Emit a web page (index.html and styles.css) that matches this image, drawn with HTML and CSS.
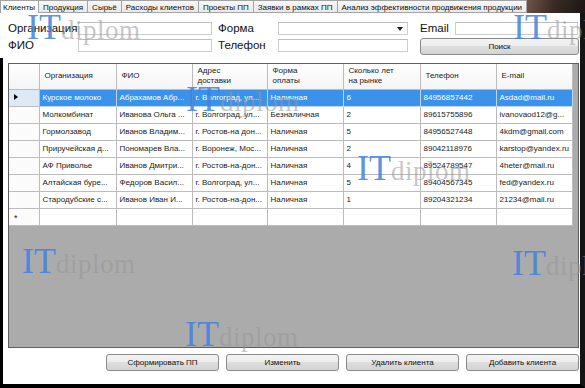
FILE: index.html
```html
<!DOCTYPE html>
<html lang="ru">
<head>
<meta charset="utf-8">
<title>Клиенты</title>
<link rel="stylesheet" href="styles.css">
</head>
<body>
<div class="tabs">
  <div class="tab active">Клиенты</div>
  <div class="tab">Продукция</div>
  <div class="tab">Сырьё</div>
  <div class="tab">Расходы клиентов</div>
  <div class="tab">Проекты ПП</div>
  <div class="tab">Заявки в рамках ПП</div>
  <div class="tab">Анализ эффективности продвижения продукции</div>
  <div class="tab-fill"></div>
</div>
<div class="main">
  <div class="form">
    <label class="lbl">Организация</label>
    <div class="field"></div>
    <label class="lbl lbl2">Форма</label>
    <div class="field select"><svg class="arrow" width="6" height="4" viewBox="0 0 6 4"><path d="M0 0H6L3 4Z" fill="#222"/></svg></div>
    <span></span>
    <label class="lbl">Email</label>
    <div class="field"></div>

    <label class="lbl">ФИО</label>
    <div class="field"></div>
    <label class="lbl lbl2">Телефон</label>
    <div class="field"></div>
    <span></span>
    <button class="btn search">Поиск</button>
  </div>
  <div class="lower">
    <div class="grid">
      <table>
        <colgroup>
          <col class="c-rh"><col class="c1"><col class="c2"><col class="c3"><col class="c4"><col class="c5"><col class="c6"><col class="c7">
        </colgroup>
        <thead>
          <tr>
            <th class="rh"></th>
            <th>Организация</th>
            <th>ФИО</th>
            <th>Адрес<br>доставки</th>
            <th>Форма<br>оплаты</th>
            <th>Сколько лет<br>на рынке</th>
            <th>Телефон</th>
            <th>E-mail</th>
          </tr>
        </thead>
        <tbody>
          <tr class="sel">
            <td class="rh"><svg width="4" height="6" viewBox="0 0 4 6"><path d="M0 0L4 3L0 6Z" fill="#000"/></svg></td>
            <td>Курское молоко</td><td>Абрахамов Абр...</td><td>г. Волгоград, ул...</td><td>Наличная</td><td>6</td><td>84956857442</td><td>Asdad@mail.ru</td>
          </tr>
          <tr>
            <td class="rh"></td>
            <td>Молкомбинат</td><td>Иванова Ольга ...</td><td>г. Волгоград, ул...</td><td>Безналичная</td><td>2</td><td>89615755896</td><td>ivanovaod12@g...</td>
          </tr>
          <tr>
            <td class="rh"></td>
            <td>Гормолзавод</td><td>Иванов Владим...</td><td>г. Ростов-на дон...</td><td>Наличная</td><td>5</td><td>84956527448</td><td>4kdm@gmail.com</td>
          </tr>
          <tr>
            <td class="rh"></td>
            <td>Приручейская д...</td><td>Пономарев Вла...</td><td>г. Воронеж, Мос...</td><td>Наличная</td><td>2</td><td>89042118976</td><td>karstop@yandex.ru</td>
          </tr>
          <tr>
            <td class="rh"></td>
            <td>АФ Приволье</td><td>Иванов Дмитри...</td><td>г. Ростов-на-дон...</td><td>Наличная</td><td>4</td><td>89524789547</td><td>4heter@mail.ru</td>
          </tr>
          <tr>
            <td class="rh"></td>
            <td>Алтайская буре...</td><td>Федоров Васил...</td><td>г. Волгоград, ул...</td><td>Наличная</td><td>5</td><td>89404567345</td><td>fed@yandex.ru</td>
          </tr>
          <tr>
            <td class="rh"></td>
            <td>Стародубские с...</td><td>Иванов Иван И...</td><td>г. Ростов-на-дон...</td><td>Наличная</td><td>1</td><td>89204321234</td><td>21234@mail.ru</td>
          </tr>
          <tr class="new">
            <td class="rh"><span class="star">*</span></td>
            <td></td><td></td><td></td><td></td><td></td><td></td><td></td>
          </tr>
        </tbody>
      </table>
    </div>
    <div class="btns">
      <button class="btn">Сформировать ПП</button>
      <button class="btn">Изменить</button>
      <button class="btn">Удалить клиента</button>
      <button class="btn">Добавить клиента</button>
    </div>
  </div>
</div>

<div class="wm wm1"><span class="it">IT</span><span class="dp">diplom</span></div>
<div class="wm wm2"><span class="it">IT</span><span class="dp">diplom</span></div>
<div class="wm wm3"><span class="it">IT</span><span class="dp">diplom</span></div>
<div class="wm wm4"><span class="it">IT</span><span class="dp">diplom</span></div>
<div class="wm wm5"><span class="it">IT</span><span class="dp">diplom</span></div>
<div class="wm wm6"><span class="it">IT</span><span class="dp">diplom</span></div>
<div class="wm wm7"><span class="it">IT</span><span class="dp">diplom</span></div>
</body>
</html>
```
FILE: styles.css
```css
* { box-sizing: border-box; }
html, body { margin: 0; padding: 0; }
body {
  width: 585px;
  height: 388px;
  overflow: hidden;
  position: relative;
  background: #fff;
  font-family: "Liberation Sans", Arial, sans-serif;
  color: #000;
}

/* tabs */
.tabs {
  display: flex;
  height: 13px;
  background: #fff;
}
.tab {
  flex: none;
  font-size: 8px;
  line-height: 11px;
  height: 13px;
  padding: 1px 4px 0;
  background: linear-gradient(#f7f7f7, #e9e9e9);
  border: 1px solid #a3a3a3;
  border-left: none;
  color: #111;
  white-space: nowrap;
}
.tab.active {
  background: #fff;
  border-left: 1px solid #a3a3a3;
  border-bottom: none;
  padding-left: 2px;
  padding-right: 3px;
}
.tab-fill {
  flex: 1;
  background: linear-gradient(100deg, #6d5647 0%, #3a2c26 45%, #1c1614 100%);
}

/* main frame */
.main {
  height: 375px;
  display: flex;
  flex-direction: column;
  border-right: 5px solid #151515;
  border-bottom: 4px solid #000;
}

/* filter form */
.form {
  height: 45px;
  padding: 9px 0 0 8px;
  display: grid;
  grid-template-columns: 70px 134px 66px 130px 12px 35px 123px;
  grid-template-rows: 13px 13px;
  row-gap: 4px;
  align-items: center;
}
.lbl {
  font-size: 11.5px;
  line-height: 13px;
  color: #111;
  white-space: nowrap;
}
.lbl2 { padding-left: 6px; }
.field {
  height: 13px;
  border: 1px solid #cdcdcd;
  border-top-color: #bdbdbd;
  background: #fff;
}
.select {
  position: relative;
  display: flex;
  align-items: center;
  justify-content: flex-end;
  padding-right: 4px;
}
.btn {
  height: 17px;
  padding: 0;
  font-family: "Liberation Sans", Arial, sans-serif;
  font-size: 8px;
  color: #111;
  border: 1px solid #8a8a8a;
  border-radius: 3px;
  background: linear-gradient(#f4f4f4 0%, #ececec 50%, #dedede 50%, #d3d3d3 100%);
}
.search {
  grid-column: 6 / span 2;
  width: 159px;
  align-self: start;
  margin-top: -1px;
}

/* lower area */
.lower {
  flex: 1;
  display: flex;
  flex-direction: column;
  border-left: 3px solid #000;
  padding: 5px 1px 0 5px;
}
.grid {
  height: 285px;
  border: 1px solid #5e5e5e;
  background: #ababab;
  overflow: hidden;
}
table {
  border-collapse: collapse;
  table-layout: fixed;
  width: 563px;
  font-size: 8px;
  color: #1a1a1a;
}
.c-rh { width: 30px; }
.c1 { width: 77px; }
.c2 { width: 76px; }
.c3 { width: 75px; }
.c4 { width: 76px; }
.c5 { width: 77px; }
.c6 { width: 76px; }
.c7 { width: 76px; }
th, td {
  border: 1px solid #bcbcbc;
  white-space: nowrap;
  overflow: hidden;
  text-align: left;
}
thead th {
  border-top: none;
  height: 25px;
  font-weight: normal;
  line-height: 10px;
  padding: 0 5px;
  background: linear-gradient(#ffffff, #f4f4f4);
  color: #222;
  vertical-align: middle;
}
thead th:first-child, tbody td:first-child { border-left: none; }
tbody td {
  height: 17px;
  padding: 0 3px;
  line-height: 15px;
  background: #fff;
}
td.rh {
  padding: 0 0 0 5px;
  background: #fbfbfb;
}
tr.sel td {
  background: #3b92ea;
  color: #fff;
  border-color: #bcd8f4;
}
tr.sel td.rh {
  background: #dde9f6;
  border-color: #bcbcbc;
}
.star {
  font-size: 9px;
  color: #222;
  position: relative;
  top: 2px;
}

/* bottom buttons */
.btns {
  display: flex;
  justify-content: flex-end;
  gap: 7px;
  margin-top: 6px;
}
.btns .btn { width: 113px; }

/* watermarks */
.wm {
  position: absolute;
  display: flex;
  align-items: baseline;
  font-family: "Liberation Serif", "Times New Roman", serif;
  line-height: 1;
  pointer-events: none;
  white-space: nowrap;
  z-index: 10;
}
.wm .it {
  font-size: 36px;
  color: rgba(66, 128, 224, 0.85);
}
.wm .dp {
  font-size: 27px;
  color: rgba(150, 150, 150, 0.55);
  letter-spacing: 0.5px;
}
.wm1 { left: 27px; top: 9px; }
.wm2 { left: 513px; top: 9px; }
.wm3 { left: 186px; top: 81px; }
.wm4 { left: 357px; top: 150px; }
.wm5 { left: 22px; top: 243px; }
.wm6 { left: 512px; top: 245px; }
.wm7 { left: 185px; top: 316px; }
```
